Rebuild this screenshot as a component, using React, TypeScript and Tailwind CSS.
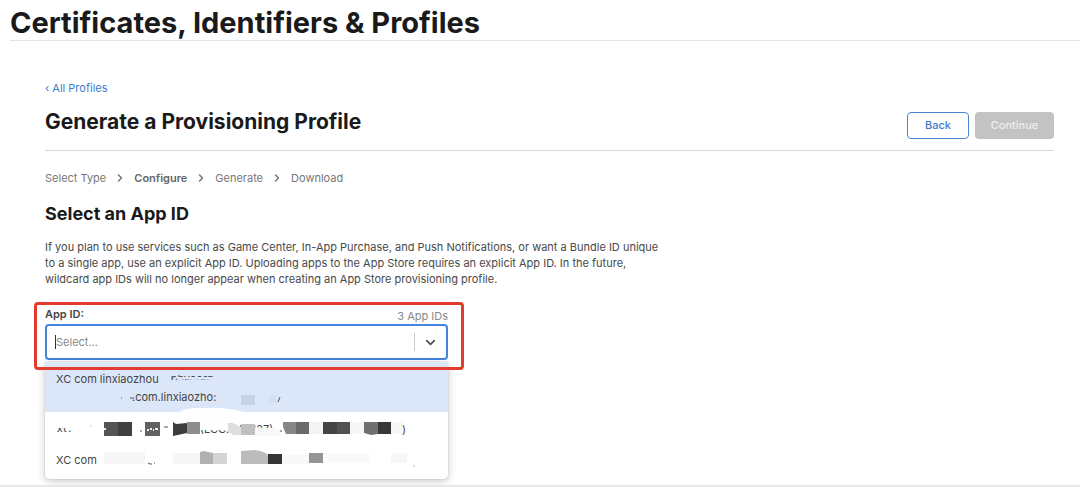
import { ChevronDown, ChevronRight } from "lucide-react";

const steps = ["Select Type", "Configure", "Generate", "Download"];

// x, y, width, height, fill
const mosaic: [number, number, number, number, string][] = [
  [196, 33, 14, 10, "#c5d3e6"],
  [224, 33, 8, 8, "#d3e0f3"],
  [59, 60, 14, 14, "#555555"],
  [73, 60, 14, 14, "#404040"],
  [100, 60, 15, 14, "#626262"],
  [142, 60, 13, 12, "#8e8e8e"],
  [196, 62, 14, 11, "#c0c0c0"],
  [210, 66, 26, 8, "#f8f8f8"],
  [251, 60, 13, 12, "#6a6a6a"],
  [264, 60, 14, 12, "#f4f4f4"],
  [278, 60, 14, 12, "#444444"],
  [292, 60, 13, 12, "#525252"],
  [305, 60, 14, 12, "#f6f6f6"],
  [333, 60, 13, 12, "#383838"],
  [346, 60, 11, 12, "#f6f6f6"],
  [59, 90, 41, 12, "#f7f7f7"],
  [128, 91, 27, 11, "#f6f6f6"],
  [168, 91, 14, 11, "#d4d4d4"],
  [223, 92, 14, 10, "#353535"],
  [237, 93, 27, 9, "#f8f8f8"],
  [264, 91, 14, 10, "#959595"],
  [278, 91, 47, 10, "#fafafa"],
  [346, 91, 16, 10, "#f7f7f7"],
];

function Redaction() {
  return (
    <svg
      aria-hidden="true"
      width="403"
      height="118"
      viewBox="0 0 403 118"
      className="pointer-events-none absolute left-0 top-0"
    >
      <path
        d="M114 18h60v4l-7-1-9-1-8 1-9-1-7 1-6-3z"
        fill="#dbe7f9"
        transform="translate(0 -3)"
      />
      <path
        d="M114 18h60v9h-60z"
        fill="#dbe7f9"
      />
      <path d="M75 27h9v11h-9z" fill="#dbe7f9" />
      <path d="M174 27h6v13h-6z" fill="#dbe7f9" />
      <path d="M135 50q2-3 14-4l26 0q15 1 24 4v8h-64z" fill="#fefefe" />
      <path d="M10 59h18v7H10zM10 70h18v6H10z" fill="#ffffff" />
      <path d="M154 59h41v9h-41z" fill="#ffffff" />

      {mosaic.map(([x, y, width, height, fill]) => (
        <rect
          key={`${x}-${y}`}
          x={x}
          y={y}
          width={width}
          height={height}
          fill={fill}
        />
      ))}

      <path d="M128 60l3 2 11-1v10l-14 3z" fill="#3c3c3c" />
      <path d="M183 61l5 0 8 4v8l-8 0-5-4z" fill="#dedede" />
      <path d="M238 60h13v12h-10l-3-7z" fill="#868686" />
      <path d="M319 60h14v12l-7 1-7-2z" fill="#707070" />
      <path d="M155 90l4-1 9 2v11h-13z" fill="#b1b1b1" />
      <path d="M196 89l14-1q9 1 13 5v9h-27z" fill="#bcbcbc" />

      <g stroke="#555555" strokeWidth="1" fill="none">
        <path d="M76 36h1M85 36h4M233 40l2-5" />
        <path d="M95 69h2M119 65h4" />
        <path d="M235 69h2M103 101l2 1h2M109 101h1" />
        <path d="M45 64h2" stroke="#cccccc" />
        <path d="M368 104h2" stroke="#bbbbbb" />
      </g>
      <path
        d="M59 67h2M102 68h2M105 67h2M108 68h1M110 67h3"
        stroke="#eeeeee"
        strokeWidth="2"
      />
    </svg>
  );
}

function AppIdSelect() {
  return (
    <div className="relative mt-[19px] w-[403px] max-w-full">
      <div className="flex items-start justify-between leading-4">
        <label
          htmlFor="app-id"
          className="text-[11px] font-semibold text-[#494949]"
        >
          App ID:
        </label>
        <span className="pt-[2px] text-[11px] text-[#888888]">3 App IDs</span>
      </div>

      <div className="flex h-[36px] items-center rounded-[4px] border-2 border-[#4485e0] bg-white">
        <span className="ml-2 h-[14px] w-px bg-[#333333]" />
        <input
          id="app-id"
          type="text"
          role="combobox"
          aria-expanded="true"
          aria-controls="app-id-options"
          placeholder="Select..."
          className="min-w-0 flex-1 bg-transparent text-[11px] outline-none placeholder:text-[#888888]"
        />
        <button
          type="button"
          aria-label="Toggle options"
          className="flex h-[18px] w-[32px] items-center justify-center border-l border-[#cccccc] text-[#555555]"
        >
          <ChevronDown size={15} strokeWidth={3} />
        </button>
      </div>

      <div className="relative mt-[2px] rounded-b-[4px] bg-white pb-1 text-[11px] text-[#444444] shadow-[0_2px_8px_rgba(0,0,0,0.22),0_0_1px_rgba(0,0,0,0.4)]">
        <ul id="app-id-options" role="listbox" aria-label="App ID">
          <li
            role="option"
            aria-selected="true"
            className="h-[50px] bg-[#dbe7f9] px-[11px] pt-2 leading-[18px]"
          >
            <div className="flex gap-3">
              <span>XC com linxiaozhou</span>
              <span>phyoorg</span>
            </div>
            <div className="pl-[76px]">.com.linxiaozho:</div>
          </li>
          <li
            role="option"
            aria-selected="false"
            className="flex h-[34px] items-center px-[11px]"
          >
            <span className="w-[144px]">XC</span>
            <span className="w-[202px]">(LCC.IIDF627)</span>
            <span>)</span>
          </li>
          <li
            role="option"
            aria-selected="false"
            className="flex h-[29px] items-center px-[11px]"
          >
            XC com
          </li>
        </ul>
        <Redaction />
      </div>

      <div className="pointer-events-none absolute -left-[11px] -right-[16px] -top-1 h-[68px] rounded-[4px] border-[3px] border-[#e33b30]" />
    </div>
  );
}

export default function App() {
  return (
    <div className="bg-white font-['Inter',sans-serif] text-[#1a1a1a]">
      <header className="ml-[10px] border-b border-[#e4e4e4] pt-[6px]">
        <p className="text-[29px] font-bold leading-[34px]">
          Certificates, Identifiers &amp; Profiles
        </p>
      </header>

      <main className="overflow-hidden border-b-2 border-[#e8e8e8] pb-[6px] pl-[45px] pr-[26px] pt-[39px]">
        <a
          href="#profiles"
          className="block w-fit text-[11px] leading-4 text-[#3d7cc9]"
        >
          ‹ All Profiles
        </a>

        <div className="mt-[11px] flex justify-between border-b border-[#d9d9d9] pb-[11px]">
          <h1 className="pt-[1px] text-[21px] font-bold leading-7">
            Generate a Provisioning Profile
          </h1>
          <div className="mt-[5px] flex gap-[6px] text-[11px] font-medium">
            <button
              type="button"
              className="h-[27px] w-[62px] rounded-[4px] border border-[#4a86d0] text-[#3d7cc9]"
            >
              Back
            </button>
            <button
              type="button"
              disabled
              className="h-[27px] w-[79px] rounded-[4px] bg-[#c3c3c3] text-[#eeeeee]"
            >
              Continue
            </button>
          </div>
        </div>

        <ol className="mt-[19px] flex items-center text-[11px] leading-4 text-[#777777]">
          {steps.map((step, index) => (
            <li key={step} className="flex items-center">
              {index > 0 && (
                <ChevronRight
                  size={12}
                  strokeWidth={3}
                  className="mx-2"
                />
              )}
              <span
                className={step === "Configure" ? "font-semibold text-[#666666]" : ""}
              >
                {step}
              </span>
            </li>
          ))}
        </ol>

        <h2 className="mt-4 text-[18px] font-bold leading-6">
          Select an App ID
        </h2>

        <p className="mt-[13px] max-w-[624px] text-[11px] leading-4 text-[#494949]">
          If you plan to use services such as Game Center, In-App Purchase, and
          Push Notifications, or want a Bundle ID unique to a single app, use an
          explicit App ID. Uploading apps to the App Store requires an explicit
          App ID. In the future, wildcard app IDs will no longer appear when
          creating an App Store provisioning profile.
        </p>

        <AppIdSelect />
      </main>
    </div>
  );
}
